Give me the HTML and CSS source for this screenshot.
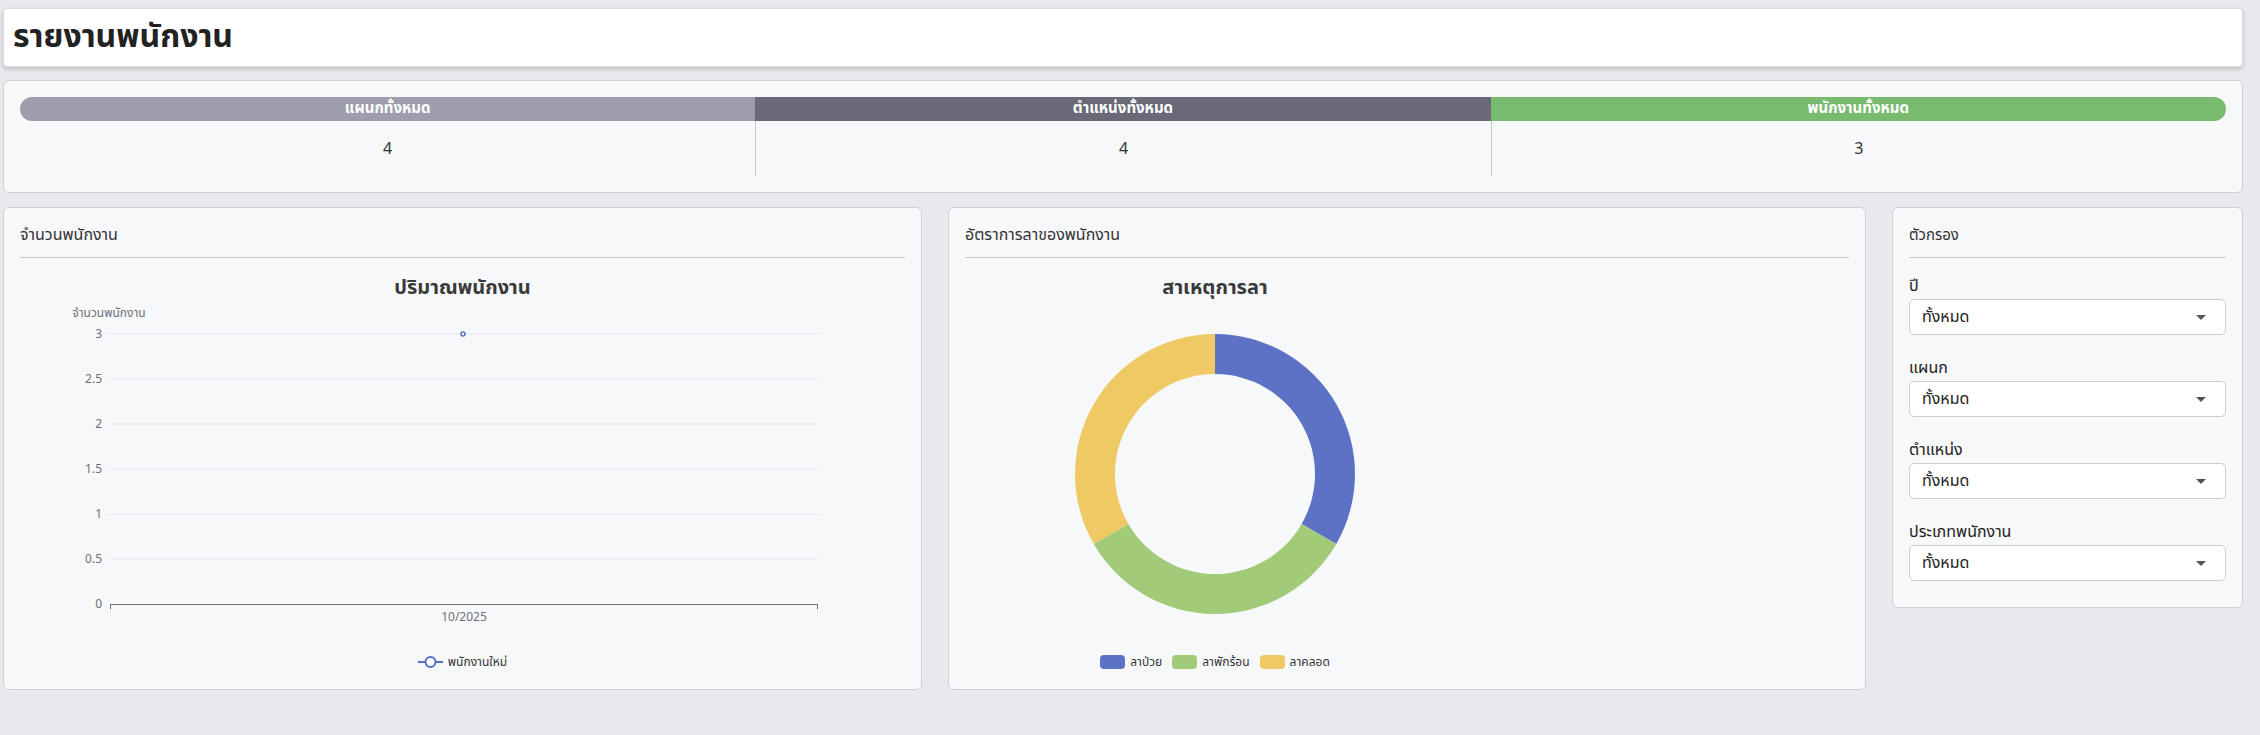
FILE: index.html
```html
<!DOCTYPE html>
<html lang="th">
<head>
<meta charset="utf-8">
<title>รายงานพนักงาน</title>
<link rel="stylesheet" href="styles.css">
</head>
<body>
<div class="page">
  <header class="title-card"><h1>รายงานพนักงาน</h1></header>

  <section class="card stats">
    <div class="stat">
      <div class="stat-head c1">แผนกทั้งหมด</div>
      <div class="stat-val">4</div>
    </div>
    <div class="stat">
      <div class="stat-head c2">ตำแหน่งทั้งหมด</div>
      <div class="stat-val sep">4</div>
    </div>
    <div class="stat">
      <div class="stat-head c3">พนักงานทั้งหมด</div>
      <div class="stat-val sep">3</div>
    </div>
  </section>

  <div class="row">
    <section class="card panel">
      <div class="panel-title">จำนวนพนักงาน</div>
      <div class="chart">
        <div class="chart-title">ปริมาณพนักงาน</div>
        <svg class="plot" width="887" height="340" viewBox="0 0 887 340">
          <text class="axis-name" x="89" y="17" text-anchor="middle">จำนวนพนักงาน</text>
          <g class="grid">
            <line x1="90" y1="34" x2="798" y2="34"/>
            <line x1="90" y1="79" x2="798" y2="79"/>
            <line x1="90" y1="124" x2="798" y2="124"/>
            <line x1="90" y1="169" x2="798" y2="169"/>
            <line x1="90" y1="214" x2="798" y2="214"/>
            <line x1="90" y1="259" x2="798" y2="259"/>
          </g>
          <g class="ylab" text-anchor="end">
            <text x="82" y="38">3</text>
            <text x="82" y="83">2.5</text>
            <text x="82" y="128">2</text>
            <text x="82" y="173">1.5</text>
            <text x="82" y="218">1</text>
            <text x="82" y="263">0.5</text>
            <text x="82" y="308">0</text>
          </g>
          <g class="axis">
            <line x1="90" y1="304.5" x2="798" y2="304.5"/>
            <line x1="90.5" y1="304" x2="90.5" y2="309"/>
            <line x1="797.5" y1="304" x2="797.5" y2="309"/>
          </g>
          <text class="xlab" x="444" y="321" text-anchor="middle">10/2025</text>
          <circle class="pt" cx="443" cy="34" r="2"/>
        </svg>
        <div class="legend">
          <span class="lg-item">
            <svg class="lg-line" width="25" height="14" viewBox="0 0 25 14"><line x1="0" y1="7" x2="25" y2="7"/><circle cx="12.5" cy="7" r="5"/></svg>
            <span>พนักงานใหม่</span>
          </span>
        </div>
      </div>
    </section>

    <section class="card panel">
      <div class="panel-title">อัตราการลาของพนักงาน</div>
      <div class="chart">
        <div class="pie-col">
          <div class="chart-title">สาเหตุการลา</div>
          <svg class="plot" width="500" height="340" viewBox="0 0 500 340">
            <path class="s1" d="M250,34 A140,140 0 0 1 371.24,244 L336.60,224 A100,100 0 0 0 250,74 Z"/>
            <path class="s2" d="M371.24,244 A140,140 0 0 1 128.76,244 L163.40,224 A100,100 0 0 0 336.60,224 Z"/>
            <path class="s3" d="M128.76,244 A140,140 0 0 1 250,34 L250,74 A100,100 0 0 0 163.40,224 Z"/>
          </svg>
          <div class="legend">
            <span class="lg-item"><i class="sw s1b"></i><span>ลาป่วย</span></span>
            <span class="lg-item"><i class="sw s2b"></i><span>ลาพักร้อน</span></span>
            <span class="lg-item"><i class="sw s3b"></i><span>ลาคลอด</span></span>
          </div>
        </div>
      </div>
    </section>

    <section class="card panel filter">
      <div class="panel-title">ตัวกรอง</div>
      <div class="groups">
        <div class="group">
          <div class="label">ปี</div>
          <div class="select"><span>ทั้งหมด</span><i class="caret"></i></div>
        </div>
        <div class="group">
          <div class="label">แผนก</div>
          <div class="select"><span>ทั้งหมด</span><i class="caret"></i></div>
        </div>
        <div class="group">
          <div class="label">ตำแหน่ง</div>
          <div class="select"><span>ทั้งหมด</span><i class="caret"></i></div>
        </div>
        <div class="group">
          <div class="label">ประเภทพนักงาน</div>
          <div class="select"><span>ทั้งหมด</span><i class="caret"></i></div>
        </div>
      </div>
    </section>
  </div>
</div>
</body>
</html>
```

FILE: styles.css
```css
* { box-sizing: border-box; }
html, body { margin: 0; padding: 0; }
body {
  background: #e9e9ed;
  font-family: "Noto Sans Thai", "Noto Sans", sans-serif;
  color: #333;
}
.page { padding: 8px 17px 0 3px; }

.title-card {
  height: 59px;
  background: #fff;
  border: 1px solid #dcdce0;
  border-radius: 4px;
  box-shadow: 0 2px 4px rgba(0,0,0,0.18);
  padding-left: 9px;
}
.title-card h1 {
  margin: 0;
  font-size: 32px;
  font-weight: 700;
  line-height: 57px;
  color: #222;
}

.card {
  background: #f7f8fa;
  border: 1px solid #cfd0d4;
  border-radius: 6px;
}

.stats {
  margin-top: 13px;
  height: 113px;
  padding: 16px;
  display: flex;
}
.stat { flex: 1; display: flex; flex-direction: column; }
.stat-head {
  height: 24px;
  line-height: 24px;
  text-align: center;
  color: #fff;
  font-weight: 700;
  font-size: 15px;
}
.c1 { background: #9d9dac; border-radius: 12px 0 0 12px; }
.c2 { background: #696977; }
.c3 { background: #78bb6f; border-radius: 0 12px 12px 0; }
.stat-val {
  height: 56px;
  display: flex;
  align-items: center;
  justify-content: center;
  font-size: 16px;
  color: #333;
}
.stat-val.sep { border-left: 1px solid #c9cacd; }

.row {
  margin-top: 14px;
  display: grid;
  grid-template-columns: 919px 918px 351px;
  column-gap: 26px;
  align-items: start;
}
.panel { padding: 16px; height: 483px; }
.panel-title {
  font-size: 16px;
  line-height: 23px;
  padding-bottom: 10px;
  border-bottom: 1px solid #c8c9cc;
  color: #333;
}
.chart { height: 416px; display: flex; flex-direction: column; }
.chart-title {
  margin-top: 18px;
  height: 24px;
  line-height: 24px;
  text-align: center;
  font-size: 20px;
  font-weight: 700;
  color: #3a3a3a;
}
.plot { display: block; }
.grid line { stroke: #e0e6f1; stroke-width: 1; }
.axis line { stroke: #6e7079; stroke-width: 1; }
.ylab text, .xlab { fill: #6e7079; font-size: 12px; }
.axis-name { fill: #6e7079; font-size: 12px; }
.pt { fill: #fff; stroke: #5470c6; stroke-width: 1.5; }

.legend {
  margin-top: 12px;
  height: 20px;
  display: flex;
  justify-content: center;
  align-items: center;
  gap: 10px;
  font-size: 12px;
  color: #333;
}
.lg-item { display: flex; align-items: center; gap: 5px; }
.lg-line line { stroke: #5470c6; stroke-width: 2; }
.lg-line circle { fill: #fff; stroke: #5470c6; stroke-width: 2; }
.sw { display: block; width: 25px; height: 14px; border-radius: 4px; }

.pie-col { width: 500px; }
.s1 { fill: #5d71c5; }
.s2 { fill: #a1ca79; }
.s3 { fill: #efc963; }
.s1b { background: #5d71c5; }
.s2b { background: #a1ca79; }
.s3b { background: #efc963; }

.filter { height: 401px; padding-bottom: 26px; }
.filter .panel-title { font-size: 15px; }
.groups { padding-top: 17px; display: flex; flex-direction: column; gap: 22px; }
.label {
  font-size: 16px;
  line-height: 22px;
  margin-bottom: 2px;
  color: #222;
}
.select {
  height: 36px;
  background: #fff;
  border: 1px solid #cbcbd0;
  border-radius: 5px;
  display: flex;
  align-items: center;
  justify-content: space-between;
  padding: 0 19px 0 12px;
  font-size: 16px;
  color: #222;
}
.caret {
  width: 0; height: 0;
  border-left: 5px solid transparent;
  border-right: 5px solid transparent;
  border-top: 5px solid #555;
}
```
